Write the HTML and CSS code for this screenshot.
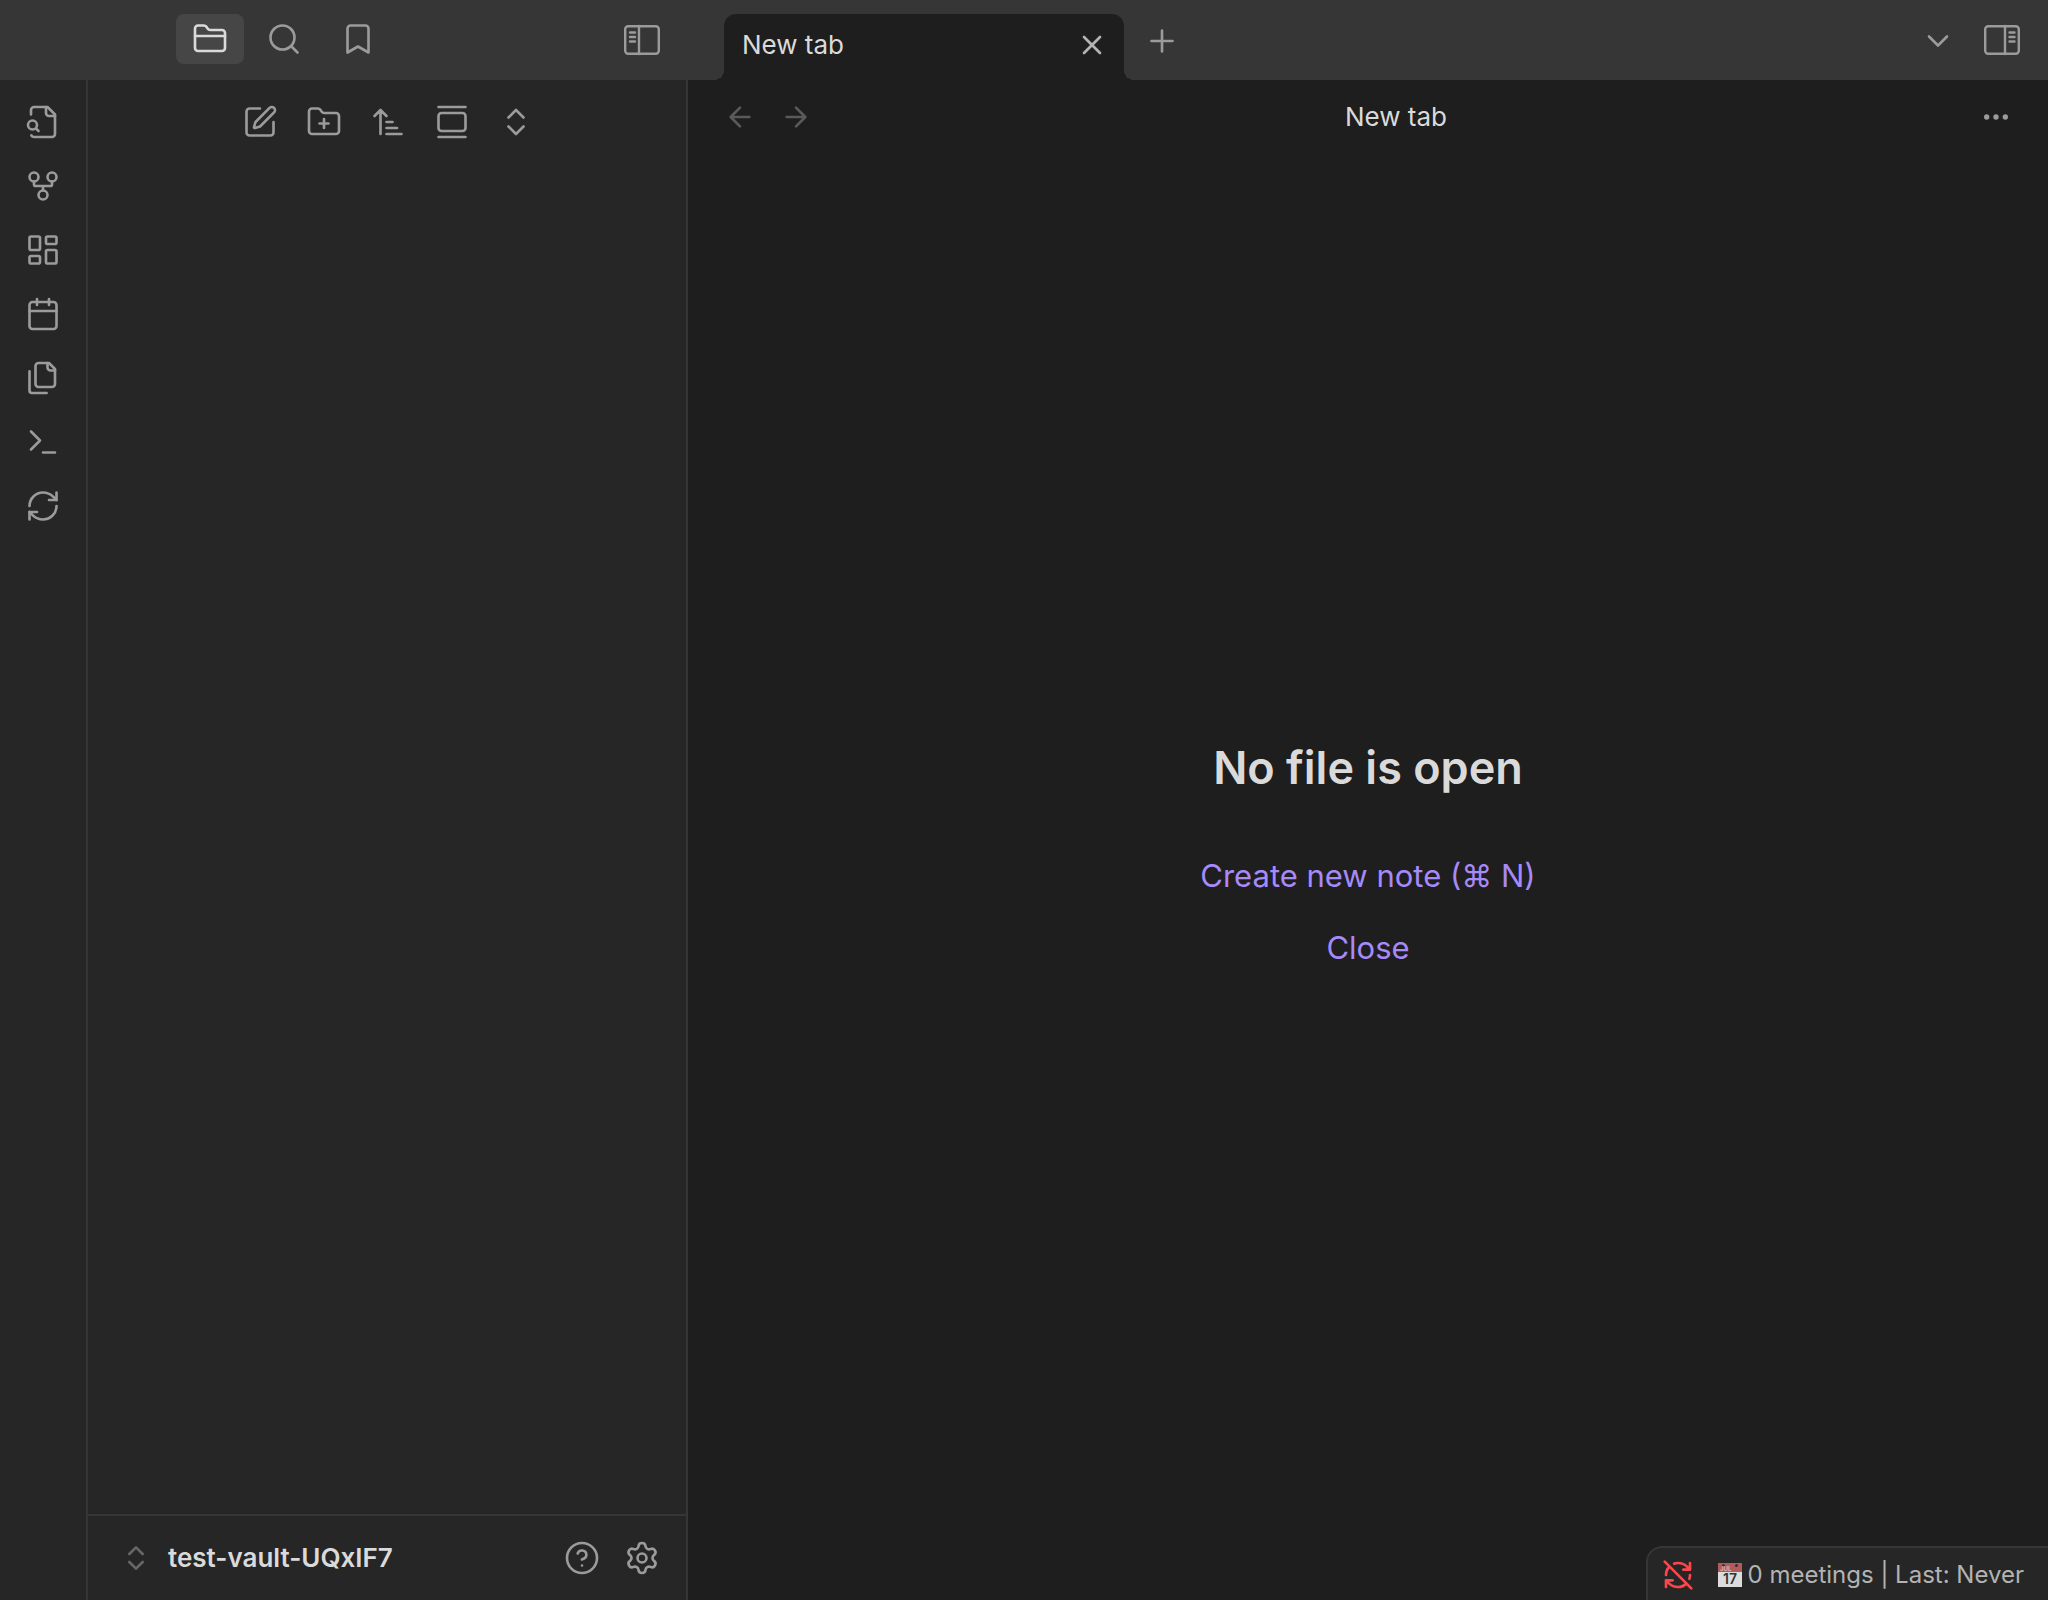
FILE: index.html
```html
<!DOCTYPE html>
<html lang="en">
<head>
<meta charset="utf-8">
<meta name="viewport" content="width=device-width, initial-scale=1">
<title>New tab - test-vault-UQxIF7</title>
<link rel="stylesheet" href="styles.css">
</head>
<body>
<div class="app">
  <header class="titlebar">
    <div class="titlebar-left">
      <div class="panel-tabs">
        <button class="panel-tab is-active" aria-label="Files"><svg class="icon" viewBox="0 0 24 24"><path d="M20 20a2 2 0 0 0 2-2V8a2 2 0 0 0-2-2h-7.900a2 2 0 0 1-1.690-.9L9.600 3.900A2 2 0 0 0 7.930 3H4a2 2 0 0 0-2 2v13a2 2 0 0 0 2 2Z"/><path d="M2 10h20"/></svg></button>
        <button class="panel-tab" aria-label="Search"><svg class="icon" viewBox="0 0 24 24"><circle cx="11" cy="11" r="8"/><path d="m21 21-4.300-4.300"/></svg></button>
        <button class="panel-tab" aria-label="Bookmarks"><svg class="icon" viewBox="0 0 24 24"><path d="m19 21-7-4-7 4V5a2 2 0 0 1 2-2h10a2 2 0 0 1 2 2z"/></svg></button>
      </div>
      <button class="sidebar-toggle" aria-label="Collapse left sidebar"><svg class="icon-toggle" viewBox="0 0 36 32"><rect x="1.200" y="2.200" width="33.600" height="27.600" rx="3"/><path d="M15 2v28M6 8.500h5M6 13h5M6 17.500h5"/></svg></button>
    </div>
    <div class="tab-strip">
      <div class="tab">
        <span class="tab-title">New tab</span>
        <button class="tab-close" aria-label="Close tab"><svg class="icon icon-s" viewBox="0 0 24 24"><path d="M18 6 6 18M6 6l12 12"/></svg></button>
      </div>
      <button class="tab-new" aria-label="New tab"><svg class="icon" viewBox="0 0 24 24"><path d="M5 12h14M12 5v14"/></svg></button>
    </div>
    <div class="titlebar-right">
      <button class="tab-new" aria-label="Tab list"><svg class="icon" viewBox="0 0 24 24"><path d="m6 9 6 6 6-6"/></svg></button>
      <button class="sidebar-toggle" aria-label="Expand right sidebar"><svg class="icon-toggle" viewBox="0 0 36 32"><rect x="1.200" y="2.200" width="33.600" height="27.600" rx="3"/><path d="M21 2v28M25.500 8.500h5M25.500 13h5M25.500 17.500h5"/></svg></button>
    </div>
  </header>

  <div class="workspace">
    <nav class="ribbon" aria-label="Ribbon">
      <button class="action" aria-label="Open quick switcher"><svg class="icon" viewBox="0 0 24 24"><path d="M14 2v4a2 2 0 0 0 2 2h4"/><path d="M4.268 21a2 2 0 0 0 1.727 1H18a2 2 0 0 0 2-2V7l-5-5H6a2 2 0 0 0-2 2v3"/><path d="m9 18-1.500-1.500"/><circle cx="5" cy="14" r="3"/></svg></button>
      <button class="action" aria-label="Open graph view"><svg class="icon" viewBox="0 0 24 24"><circle cx="12" cy="18" r="3"/><circle cx="6" cy="6" r="3"/><circle cx="18" cy="6" r="3"/><path d="M18 9v2c0 .6-.4 1-1 1H7c-.6 0-1-.4-1-1V9M12 12v3"/></svg></button>
      <button class="action" aria-label="Create new canvas"><svg class="icon" viewBox="0 0 24 24"><rect x="3" y="3" width="7" height="9" rx="1"/><rect x="14" y="3" width="7" height="5" rx="1"/><rect x="14" y="12" width="7" height="9" rx="1"/><rect x="3" y="16" width="7" height="5" rx="1"/></svg></button>
      <button class="action" aria-label="Open today's daily note"><svg class="icon" viewBox="0 0 24 24"><path d="M8 2v4M16 2v4"/><rect x="3" y="4" width="18" height="18" rx="2"/><path d="M3 10h18"/></svg></button>
      <button class="action" aria-label="Insert template"><svg class="icon" viewBox="0 0 24 24"><path d="M20 7h-3a2 2 0 0 1-2-2V2"/><path d="M9 18a2 2 0 0 1-2-2V4a2 2 0 0 1 2-2h7l4 4v10a2 2 0 0 1-2 2Z"/><path d="M3 7.600v12.800A1.600 1.600 0 0 0 4.600 22h9.800"/></svg></button>
      <button class="action" aria-label="Open command palette"><svg class="icon" viewBox="0 0 24 24"><path d="m4 17 6-6-6-6M12 19h8"/></svg></button>
      <button class="action" aria-label="Sync"><svg class="icon" viewBox="0 0 24 24"><path d="M3 12a9 9 0 0 1 9-9 9.750 9.750 0 0 1 6.740 2.740L21 8"/><path d="M21 3v5h-5"/><path d="M21 12a9 9 0 0 1-9 9 9.750 9.750 0 0 1-6.740-2.740L3 16"/><path d="M8 16H3v5"/></svg></button>
    </nav>

    <aside class="sidebar">
      <div class="sidebar-actions">
        <button class="action" aria-label="New note"><svg class="icon" viewBox="0 0 24 24"><path d="M12 3H5a2 2 0 0 0-2 2v14a2 2 0 0 0 2 2h14a2 2 0 0 0 2-2v-7"/><path d="M18.375 2.625a1 1 0 0 1 3 3l-9.013 9.014a2 2 0 0 1-.853.505l-2.873.84a.5.5 0 0 1-.62-.62l.84-2.873a2 2 0 0 1 .506-.852z"/></svg></button>
        <button class="action" aria-label="New folder"><svg class="icon" viewBox="0 0 24 24"><path d="M12 10v6M9 13h6"/><path d="M20 20a2 2 0 0 0 2-2V8a2 2 0 0 0-2-2h-7.900a2 2 0 0 1-1.690-.9L9.600 3.900A2 2 0 0 0 7.930 3H4a2 2 0 0 0-2 2v13a2 2 0 0 0 2 2Z"/></svg></button>
        <button class="action" aria-label="Change sort order"><svg class="icon" viewBox="0 0 24 24"><path d="m3 8 4-4 4 4M7 4v16M11 12h4M11 16h7M11 20h10"/></svg></button>
        <button class="action" aria-label="Auto-reveal current file"><svg class="icon" viewBox="0 0 24 24"><path d="M3 2h18M3 22h18"/><rect x="3" y="6" width="18" height="12" rx="2"/></svg></button>
        <button class="action" aria-label="Expand all"><svg class="icon" viewBox="0 0 24 24"><path d="m7 15 5 5 5-5M7 9l5-5 5 5"/></svg></button>
      </div>
      <div class="file-list"></div>
      <footer class="vault">
        <button class="vault-switcher"><svg class="icon icon-s icon-faint" viewBox="0 0 24 24"><path d="m7 15 5 5 5-5M7 9l5-5 5 5"/></svg><span>test-vault-UQxIF7</span></button>
        <button class="vault-action" aria-label="Help"><svg class="icon" viewBox="0 0 24 24"><circle cx="12" cy="12" r="10"/><path d="M9.090 9a3 3 0 0 1 5.830 1c0 2-3 3-3 3M12 17h.01"/></svg></button>
        <button class="vault-action" aria-label="Settings"><svg class="icon" viewBox="0 0 24 24"><path d="M9.671 4.136a2.340 2.340 0 0 1 4.659 0 2.340 2.340 0 0 0 3.319 1.915 2.340 2.340 0 0 1 2.330 4.033 2.340 2.340 0 0 0 0 3.831 2.340 2.340 0 0 1-2.330 4.033 2.340 2.340 0 0 0-3.319 1.915 2.340 2.340 0 0 1-4.659 0 2.340 2.340 0 0 0-3.320-1.915 2.340 2.340 0 0 1-2.330-4.033 2.340 2.340 0 0 0 0-3.831A2.340 2.340 0 0 1 6.350 6.051a2.340 2.340 0 0 0 3.319-1.915"/><circle cx="12" cy="12" r="3"/></svg></button>
      </footer>
    </aside>

    <main class="view">
      <div class="view-header">
        <button class="view-action" aria-label="Back" disabled><svg class="icon icon-s" viewBox="0 0 24 24"><path d="m12 19-7-7 7-7M19 12H5"/></svg></button>
        <button class="view-action" aria-label="Forward" disabled><svg class="icon icon-s" viewBox="0 0 24 24"><path d="M5 12h14M12 5l7 7-7 7"/></svg></button>
        <div class="view-title">New tab</div>
        <button class="view-action" aria-label="More options"><svg class="icon icon-s" viewBox="0 0 24 24"><circle cx="12" cy="12" r="1"/><circle cx="19" cy="12" r="1"/><circle cx="5" cy="12" r="1"/></svg></button>
      </div>
      <div class="empty-state">
        <h2 class="empty-title">No file is open</h2>
        <a class="empty-action" href="#new">Create new note (⌘ N)</a>
        <a class="empty-action" href="#close">Close</a>
      </div>
      <div class="status-bar">
        <button class="status-sync" aria-label="Sync off"><svg class="icon icon-s" viewBox="0 0 24 24"><path d="M21 8 18.740 5.740A9.750 9.750 0 0 0 12 3c-1 0-1.970.16-2.870.47M8 16H3v5M3 12c0-2.490 1-4.740 2.640-6.360M3 16l2.260 2.260A9.750 9.750 0 0 0 12 21c2.490 0 4.740-1 6.360-2.640M21 12c0 1-.16 1.970-.47 2.870M21 3v5h-5M22 22 2 2"/></svg></button>
        <div class="status-item">
          <svg class="calendar" viewBox="0 0 24 24" aria-hidden="true"><rect width="24" height="24" fill="#dcdcdc"/><rect width="24" height="9" fill="#b05c5c"/><circle cx="5.500" cy="2.500" r="1.500" fill="#44292b"/><circle cx="18.500" cy="2.500" r="1.500" fill="#44292b"/><text class="calendar-month" x="2" y="8">JUL</text><text class="calendar-day" x="12" y="21" text-anchor="middle">17</text></svg>
          <span>0 meetings | Last: Never</span>
        </div>
      </div>
    </main>
  </div>
</div>
</body>
</html>
```
FILE: styles.css
```css
:root {
  --bar: #363636;
  --panel: #262626;
  --page: #1e1e1e;
  --line: #363636;
  --text: #dadada;
  --muted: #b3b3b3;
  --icon: #9b9b9b;
  --faint: #666666;
  --accent: #a68af9;
}

* { box-sizing: border-box; }

body {
  margin: 0;
  background: var(--page);
  color: var(--text);
  font: 26px/32px Inter, "Liberation Sans", sans-serif;
}

button {
  display: flex;
  align-items: center;
  justify-content: center;
  margin: 0;
  padding: 0;
  border: 0;
  background: none;
  color: var(--icon);
  font: inherit;
}

.icon, .icon-toggle {
  flex: none;
  width: 36px;
  height: 36px;
  fill: none;
  stroke: currentColor;
  stroke-width: 1.75;
  stroke-linecap: round;
  stroke-linejoin: round;
}
.icon-s { width: 32px; height: 32px; stroke-width: 2; }
.icon-faint { color: var(--faint); }
.icon-toggle { height: 32px; stroke-width: 2.4; }

.app {
  display: flex;
  flex-direction: column;
  min-height: 100vh;
}

/* Title bar */
.titlebar {
  display: flex;
  height: 80px;
  background: var(--bar);
}
.titlebar-left {
  display: flex;
  flex: none;
  justify-content: space-between;
  width: 688px;
  padding: 14px 28px 16px 176px;
}
.panel-tabs { display: flex; gap: 6px; }
.panel-tab {
  width: 68px;
  height: 50px;
  border-radius: 8px;
}
.panel-tab.is-active { background: #464646; color: var(--text); }
.sidebar-toggle { width: 36px; height: 52px; }

.tab-strip {
  display: flex;
  flex: 1;
  gap: 12px;
  padding: 14px 36px 0;
}
.tab {
  position: relative;
  display: flex;
  align-items: center;
  justify-content: space-between;
  width: 400px;
  padding: 0 16px 4px 18px;
  border-radius: 12px 12px 0 0;
  background: var(--page);
}
.tab::before, .tab::after {
  content: "";
  position: absolute;
  bottom: 0;
  width: 10px;
  height: 10px;
}
.tab::before {
  right: 100%;
  background: radial-gradient(circle at 0 0, transparent 10px, var(--page) 10px);
}
.tab::after {
  left: 100%;
  background: radial-gradient(circle at 100% 0, transparent 10px, var(--page) 10px);
}
.tab-close { color: var(--muted); }
.tab-new { width: 52px; height: 54px; }
.titlebar-right {
  display: flex;
  gap: 20px;
  padding: 14px 28px 0 0;
}

/* Workspace */
.workspace { display: flex; flex: 1; }
.ribbon {
  display: flex;
  flex: none;
  flex-direction: column;
  align-items: center;
  gap: 12px;
  width: 88px;
  padding-top: 16px;
  border-right: 2px solid var(--line);
  background: var(--panel);
}
.action { width: 52px; height: 52px; }

.sidebar {
  display: flex;
  flex: none;
  flex-direction: column;
  width: 600px;
  border-right: 2px solid var(--line);
  background: var(--panel);
}
.sidebar-actions {
  display: flex;
  justify-content: center;
  gap: 12px;
  padding: 16px 0 0 2px;
}
.file-list { flex: 1; }
.vault {
  display: flex;
  align-items: center;
  gap: 8px;
  height: 86px;
  padding: 0 18px 0 32px;
  border-top: 2px solid var(--line);
}
.vault-switcher {
  flex: 1;
  justify-content: flex-start;
  gap: 16px;
  color: var(--text);
  font-weight: 600;
}
.vault-action { width: 52px; height: 52px; }

/* Main view */
.view {
  display: flex;
  flex: 1;
  flex-direction: column;
}
.view-header {
  display: flex;
  align-items: center;
  height: 74px;
  padding: 0 24px;
}
.view-action { width: 56px; height: 52px; }
.view-action:disabled { color: #5a5a5a; }
.view-title { flex: 1; text-align: center; }

.empty-state {
  display: flex;
  flex: 1;
  flex-direction: column;
  align-items: center;
  justify-content: center;
  gap: 32px;
  padding-top: 8px;
}
.empty-title {
  margin: 0 0 28px;
  font-size: 45px;
  font-weight: 600;
  line-height: 56px;
}
.empty-action {
  color: var(--accent);
  font-size: 31px;
  line-height: 40px;
  text-decoration: none;
}

.status-bar {
  display: flex;
  align-items: center;
  align-self: flex-end;
  gap: 24px;
  height: 54px;
  padding: 2px 24px 0 14px;
  border: solid var(--line);
  border-width: 2px 0 0 2px;
  border-top-left-radius: 16px;
  background: var(--panel);
  color: var(--muted);
  font-size: 24px;
}
.status-sync { color: #fb464c; }
.status-item { display: flex; align-items: center; gap: 6px; }
.calendar { width: 24px; height: 24px; }
.calendar-month { fill: #e4b9b9; font-size: 6px; font-weight: 600; }
.calendar-day { fill: #333333; font-size: 14px; font-weight: 600; }
```
